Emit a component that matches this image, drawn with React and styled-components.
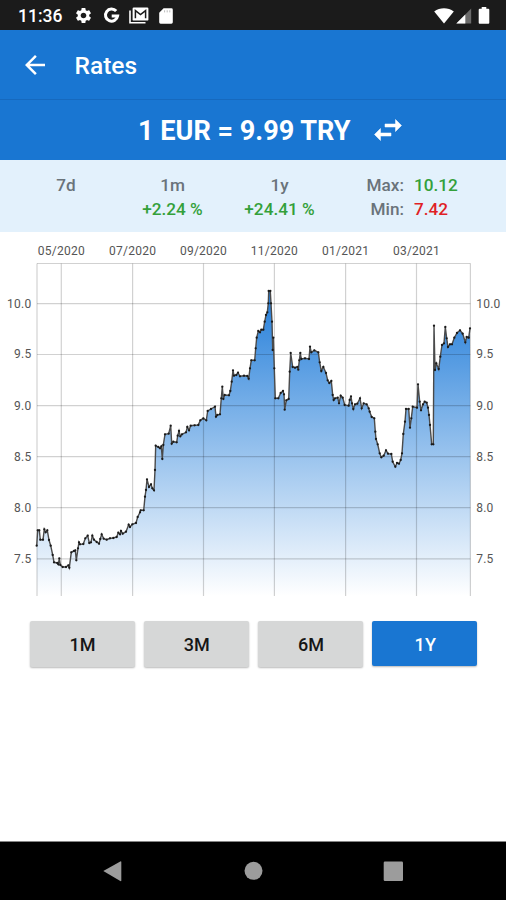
import React from 'react';
import styled, { createGlobalStyle } from 'styled-components';
import { MdArrowBack, MdSettings } from 'react-icons/md';

const GlobalStyle = createGlobalStyle`
  * {
    box-sizing: border-box;
  }

  body {
    margin: 0;
    background: #fff;
    font-family: Roboto, 'Liberation Sans', sans-serif;
  }
`;

const Screen = styled.div`
  width: 506px;
  height: 900px;
  display: flex;
  flex-direction: column;
  background: #fff;
  overflow: hidden;
`;

const StatusBar = styled.header`
  height: 30px;
  flex: none;
  display: flex;
  align-items: center;
  justify-content: space-between;
  padding: 1px 16.5px 0 18px;
  background: #1b1b1b;
  color: #fff;

  svg {
    display: block;
  }
`;

StatusBar.Group = styled.div`
  display: flex;
  align-items: center;
  gap: ${({ $gap }) => $gap}px;
`;

StatusBar.Time = styled.span`
  width: 46.5px;
  font-size: 17.5px;
  font-weight: 500;
  line-height: 30px;
  white-space: nowrap;
`;

const AppBar = styled.div`
  height: 70px;
  flex: none;
  display: flex;
  align-items: center;
  gap: 24.5px;
  padding: 0 20px 0 20px;
  background: #1976d2;
  border-bottom: 1px solid #1669be;
  color: #fff;

  svg {
    display: block;
  }
`;

AppBar.Title = styled.h1`
  margin: 2px 0 0;
  font-size: 24.5px;
  font-weight: 500;
`;

const RateBar = styled.section`
  height: 60px;
  flex: none;
  display: flex;
  align-items: center;
  gap: 19px;
  padding-left: 138px;
  background: #1976d2;
  color: #fff;

  svg {
    display: block;
  }
`;

RateBar.Text = styled.h2`
  margin: 2px 0 0;
  font-size: 27.1px;
  font-weight: 700;
  white-space: nowrap;
`;

const Stats = styled.section`
  height: 72px;
  flex: none;
  display: grid;
  grid-template-columns: 106px 107px 107px 1fr;
  padding: 13px 0 0 13px;
  background: #e3f1fc;
  font-size: 17.2px;
  font-weight: 500;
  line-height: 24px;
  color: #6a737a;
`;

const Stat = styled.div`
  display: flex;
  flex-direction: column;
  align-items: center;
  white-space: nowrap;
`;

const Range = styled.div`
  display: grid;
  grid-template-columns: 71px auto;
  column-gap: 10px;
  align-content: start;
`;

Range.Label = styled.span`
  text-align: right;
`;

const Value = styled.span`
  color: ${({ $down }) => ($down ? '#e01f26' : '#33a03a')};
`;

const ChartArea = styled.section`
  height: 368px;
  flex: none;
  padding-top: 3px;

  svg {
    display: block;
  }
`;

const AxisLabel = styled.text`
  font-family: Roboto, 'Liberation Sans', sans-serif;
  font-size: 12px;
  letter-spacing: 0.25px;
  fill: #555;
`;

const Periods = styled.nav`
  display: flex;
  gap: 9.4px;
  flex: 1;
  align-items: flex-start;
  padding: 21px 28.8px 0 29.7px;
`;

const PeriodButton = styled.button`
  flex: 1;
  height: ${({ $active }) => ($active ? 45 : 46)}px;
  padding: ${({ $active }) => ($active ? 2 : 0)}px 0 0 1px;
  border: 0;
  border-radius: 2px;
  background: ${({ $active }) => ($active ? '#1976d2' : '#d6d7d7')};
  box-shadow: 0 1px 2px rgba(0, 0, 0, 0.28);
  color: ${({ $active }) => ($active ? '#fff' : '#161616')};
  font-family: inherit;
  font-size: 18px;
  font-weight: 500;
  letter-spacing: 0.2px;
`;

const NavBar = styled.footer`
  height: 59px;
  flex: none;
  border-top: 1px solid #858585;
  background: #000;

  svg {
    display: block;
  }
`;

// Chart coordinates are stored in thirds of a pixel.
const UNIT = 3;

const points = [
  [110, 932], [113, 886], [118, 886], [121, 914], [129, 914], [133, 883], [137, 892], [142, 886],
  [147, 915], [152, 932], [158, 960], [162, 982], [172, 984], [175, 988], [178, 970], [181, 990],
  [188, 996], [198, 996], [205, 991], [208, 998], [214, 952], [222, 948], [226, 946], [229, 976],
  [234, 940], [237, 922], [240, 928], [250, 927], [256, 910], [263, 902], [268, 924], [273, 922],
  [277, 902], [282, 914], [290, 921], [297, 926], [301, 912], [305, 898], [311, 911], [320, 914],
  [330, 910], [340, 909], [350, 906], [355, 893], [360, 898], [363, 888], [368, 896], [378, 890],
  [386, 869], [390, 876], [397, 868], [408, 864], [413, 846], [420, 832], [422, 826], [431, 826],
  [435, 785], [438, 765], [441, 733], [447, 756], [453, 748], [457, 760], [462, 766], [465, 705],
  [467, 632], [475, 636], [480, 640], [484, 634], [487, 672], [490, 630], [495, 598], [506, 596],
  [512, 572], [515, 626], [520, 620], [530, 622], [533, 602], [537, 588], [541, 604], [546, 598],
  [558, 592], [562, 576], [567, 586], [572, 572], [584, 571], [595, 570], [601, 556], [610, 550],
  [619, 556], [623, 528], [633, 522], [645, 515], [648, 545], [652, 540], [660, 538], [664, 490],
  [667, 455], [670, 492], [674, 480], [687, 481], [691, 468], [695, 440], [699, 406], [702, 422],
  [709, 420], [714, 413], [720, 424], [732, 422], [742, 423], [746, 431], [750, 400], [754, 376],
  [764, 376], [767, 340], [770, 308], [775, 288], [780, 292], [784, 284], [790, 284], [794, 260],
  [798, 240], [802, 232], [805, 205], [806, 168], [811, 168], [813, 205], [816, 260], [818, 345],
  [820, 308], [823, 400], [826, 490], [835, 490], [842, 474], [849, 468], [852, 478], [854, 524],
  [859, 496], [866, 492], [869, 410], [872, 354], [878, 396], [885, 398], [892, 396], [895, 404],
  [898, 376], [901, 354], [904, 372], [915, 370], [927, 372], [930, 335], [934, 352], [943, 346],
  [955, 352], [959, 382], [964, 408], [970, 396], [978, 414], [983, 436], [988, 444], [994, 438],
  [998, 480], [1001, 495], [1005, 490], [1013, 488], [1017, 505], [1022, 482], [1028, 488],
  [1034, 510], [1046, 512], [1049, 495], [1053, 484], [1056, 505], [1060, 522], [1065, 508],
  [1072, 506], [1080, 490], [1085, 520], [1091, 505], [1100, 508], [1106, 520], [1109, 530],
  [1115, 546], [1123, 550], [1126, 590], [1128, 612], [1133, 628], [1139, 655], [1144, 667],
  [1151, 662], [1158, 646], [1164, 656], [1174, 657], [1178, 680], [1186, 695], [1191, 684],
  [1197, 686], [1202, 675], [1206, 655], [1210, 597], [1215, 560], [1218, 522], [1226, 522],
  [1230, 578], [1234, 550], [1238, 515], [1251, 518], [1254, 448], [1259, 500], [1263, 526],
  [1269, 508], [1274, 500], [1280, 503], [1284, 518], [1287, 540], [1290, 570], [1295, 628],
  [1300, 628], [1302, 272], [1305, 405], [1309, 385], [1316, 402], [1321, 365], [1326, 330],
  [1332, 325], [1336, 276], [1340, 310], [1344, 336], [1350, 328], [1356, 328], [1363, 308],
  [1371, 294], [1380, 286], [1388, 296], [1396, 322], [1400, 306], [1406, 308], [1410, 280],
].map(([x, y]) => [x / UNIT, y / UNIT]);

const months = [
  { label: '05/2020', x: 61.3 },
  { label: '07/2020', x: 132.6 },
  { label: '09/2020', x: 203.5 },
  { label: '11/2020', x: 274.4 },
  { label: '01/2021', x: 345.6 },
  { label: '03/2021', x: 416.5 },
];

const rates = [
  { label: '10.0', y: 68.6 },
  { label: '9.5', y: 119.5 },
  { label: '9.0', y: 170.6 },
  { label: '8.5', y: 221.7 },
  { label: '8.0', y: 272.7 },
  { label: '7.5', y: 323.8 },
];

const plot = {
  left: 37, right: 470.4, top: 28.5, bottom: 361,
};

function GoogleIcon() {
  return (
    <svg width="17" height="17" viewBox="0 0 17 17" fill="none" stroke="#fff" strokeWidth="3">
      <path d="M13.2 4.1A6.1 6.1 0 1 0 14.6 9.1H8.7" />
    </svg>
  );
}

function MailStackIcon() {
  return (
    <svg width="20" height="17" viewBox="0 0 20 17">
      <path d="M1 3.5V15.8H16.5" fill="none" stroke="#fff" strokeWidth="1.6" />
      <rect x="3.6" y="0.6" width="15.8" height="13" rx="1.2" fill="#fff" />
      <path d="M6.4 11.2V3.6L11.5 7.6L16.6 3.6V11.2" fill="none" stroke="#1b1b1b" strokeWidth="1.5" />
    </svg>
  );
}

function CardIcon() {
  return (
    <svg width="14" height="16" viewBox="0 0 14 16">
      <path d="M4.6 0.3H12.4A1.4 1.4 0 0 1 13.8 1.7V14.3A1.4 1.4 0 0 1 12.4 15.7H1.6A1.4 1.4 0 0 1 .2 14.3V4.7Z" fill="#fff" />
      <path d="M5.6 2.3V4.4M8.2 2.3V4.4M10.8 2.3V4.4" stroke="#bbb" strokeWidth="1" />
    </svg>
  );
}

function WifiIcon() {
  return (
    <svg width="20" height="16" viewBox="0 0 20 16">
      <path d="M.2 3.4C6 -.7 14 -.7 19.8 3.4L10 15.6Z" fill="#fff" />
    </svg>
  );
}

function SignalIcon() {
  return (
    <svg width="16" height="16" viewBox="0 0 16 16">
      <path d="M.3 15.5L15.2 .5V15.5Z" fill="#6b6b6b" />
      <path d="M.3 15.5L9.3 6.4V15.5Z" fill="#fff" />
    </svg>
  );
}

function BatteryIcon() {
  return (
    <svg width="16" height="17" viewBox="-4 0 16 17">
      <path d="M3.7 0H8.3V1.8H10.3Q11.3 1.8 11.3 2.8V15.8Q11.3 16.8 10.3 16.8H1.7Q.7 16.8 .7 15.8V2.8Q.7 1.8 1.7 1.8H3.7Z" fill="#fff" />
    </svg>
  );
}

function SwapIcon() {
  return (
    <svg width="36" height="36" viewBox="0 0 24 24" fill="#fff" stroke="#fff" strokeWidth="0.35">
      <path d="M6.99 11L3 15l3.99 4v-3H14v-2H6.99v-3zM21 9l-3.99-4v3H10v2h7.01v3L21 9z" />
    </svg>
  );
}

function RateChart() {
  const line = points.map(([x, y]) => `${x.toFixed(1)},${y.toFixed(1)}`).join(' ');
  const area = `${plot.left},${plot.bottom} ${line} ${plot.right},${plot.bottom}`;

  return (
    <svg width="506" height="365" viewBox="0 0 506 365">
      <defs>
        <linearGradient
          id="area"
          gradientUnits="userSpaceOnUse"
          x1="0"
          y1={plot.top}
          x2="0"
          y2={plot.bottom}
        >
          <stop offset="0" stopColor="#1976d2" />
          <stop offset="0.12" stopColor="#2c83db" />
          <stop offset="1" stopColor="#fff" />
        </linearGradient>
      </defs>
      <polygon points={area} fill="url(#area)" />
      <g stroke="#000" strokeOpacity="0.18" strokeWidth="1.2">
        <path d={`M${plot.left} ${plot.top}H${plot.right}`} />
        <path d={`M${plot.left} ${plot.top}V${plot.bottom}`} />
        <path d={`M${plot.right} ${plot.top}V${plot.bottom}`} />
        {months.map(({ label, x }) => (
          <path key={label} d={`M${x} ${plot.top}V${plot.bottom}`} />
        ))}
        {rates.map(({ label, y }) => (
          <path key={label} d={`M${plot.left} ${y}H${plot.right}`} />
        ))}
      </g>
      <polyline points={line} fill="none" stroke="#4a4a4a" strokeWidth="1.4" />
      {points.map(([x, y]) => (
        <circle key={`${x}-${y}`} cx={x} cy={y} r="1.15" fill="#1a1a1a" />
      ))}
      {months.map(({ label, x }) => (
        <AxisLabel key={label} x={x} y="20" textAnchor="middle">{label}</AxisLabel>
      ))}
      {rates.map(({ label, y }) => (
        <React.Fragment key={label}>
          <AxisLabel x="31.5" y={y + 3.9} textAnchor="end">{label}</AxisLabel>
          <AxisLabel x="476.2" y={y + 3.9}>{label}</AxisLabel>
        </React.Fragment>
      ))}
    </svg>
  );
}

export default function App() {
  return (
    <>
      <GlobalStyle />
      <Screen>
        <StatusBar>
          <StatusBar.Group $gap={9.5}>
            <StatusBar.Time>11:36</StatusBar.Time>
            <MdSettings size={19} />
            <GoogleIcon />
            <MailStackIcon />
            <CardIcon />
          </StatusBar.Group>
          <StatusBar.Group $gap={2}>
            <WifiIcon />
            <SignalIcon />
            <BatteryIcon />
          </StatusBar.Group>
        </StatusBar>
        <AppBar>
          <MdArrowBack size={30} />
          <AppBar.Title>Rates</AppBar.Title>
        </AppBar>
        <RateBar>
          <RateBar.Text>1 EUR = 9.99 TRY</RateBar.Text>
          <SwapIcon />
        </RateBar>
        <Stats>
          <Stat>
            <span>7d</span>
          </Stat>
          <Stat>
            <span>1m</span>
            <Value>+2.24 %</Value>
          </Stat>
          <Stat>
            <span>1y</span>
            <Value>+24.41 %</Value>
          </Stat>
          <Range>
            <Range.Label>Max:</Range.Label>
            <Value>10.12</Value>
            <Range.Label>Min:</Range.Label>
            <Value $down>7.42</Value>
          </Range>
        </Stats>
        <ChartArea>
          <RateChart />
        </ChartArea>
        <Periods>
          <PeriodButton>1M</PeriodButton>
          <PeriodButton>3M</PeriodButton>
          <PeriodButton>6M</PeriodButton>
          <PeriodButton $active>1Y</PeriodButton>
        </Periods>
        <NavBar>
          <svg width="506" height="58" viewBox="0 0 506 58" fill="#9c9c9c">
            <path d="M103.3 29L120.3 19.4Q121.3 19 121.3 20V38.5Q121.3 39.5 120.3 39Z" />
            <circle cx="253.5" cy="28.8" r="9" />
            <rect x="383.7" y="19.6" width="19.3" height="19.3" rx="1.2" />
          </svg>
        </NavBar>
      </Screen>
    </>
  );
}
